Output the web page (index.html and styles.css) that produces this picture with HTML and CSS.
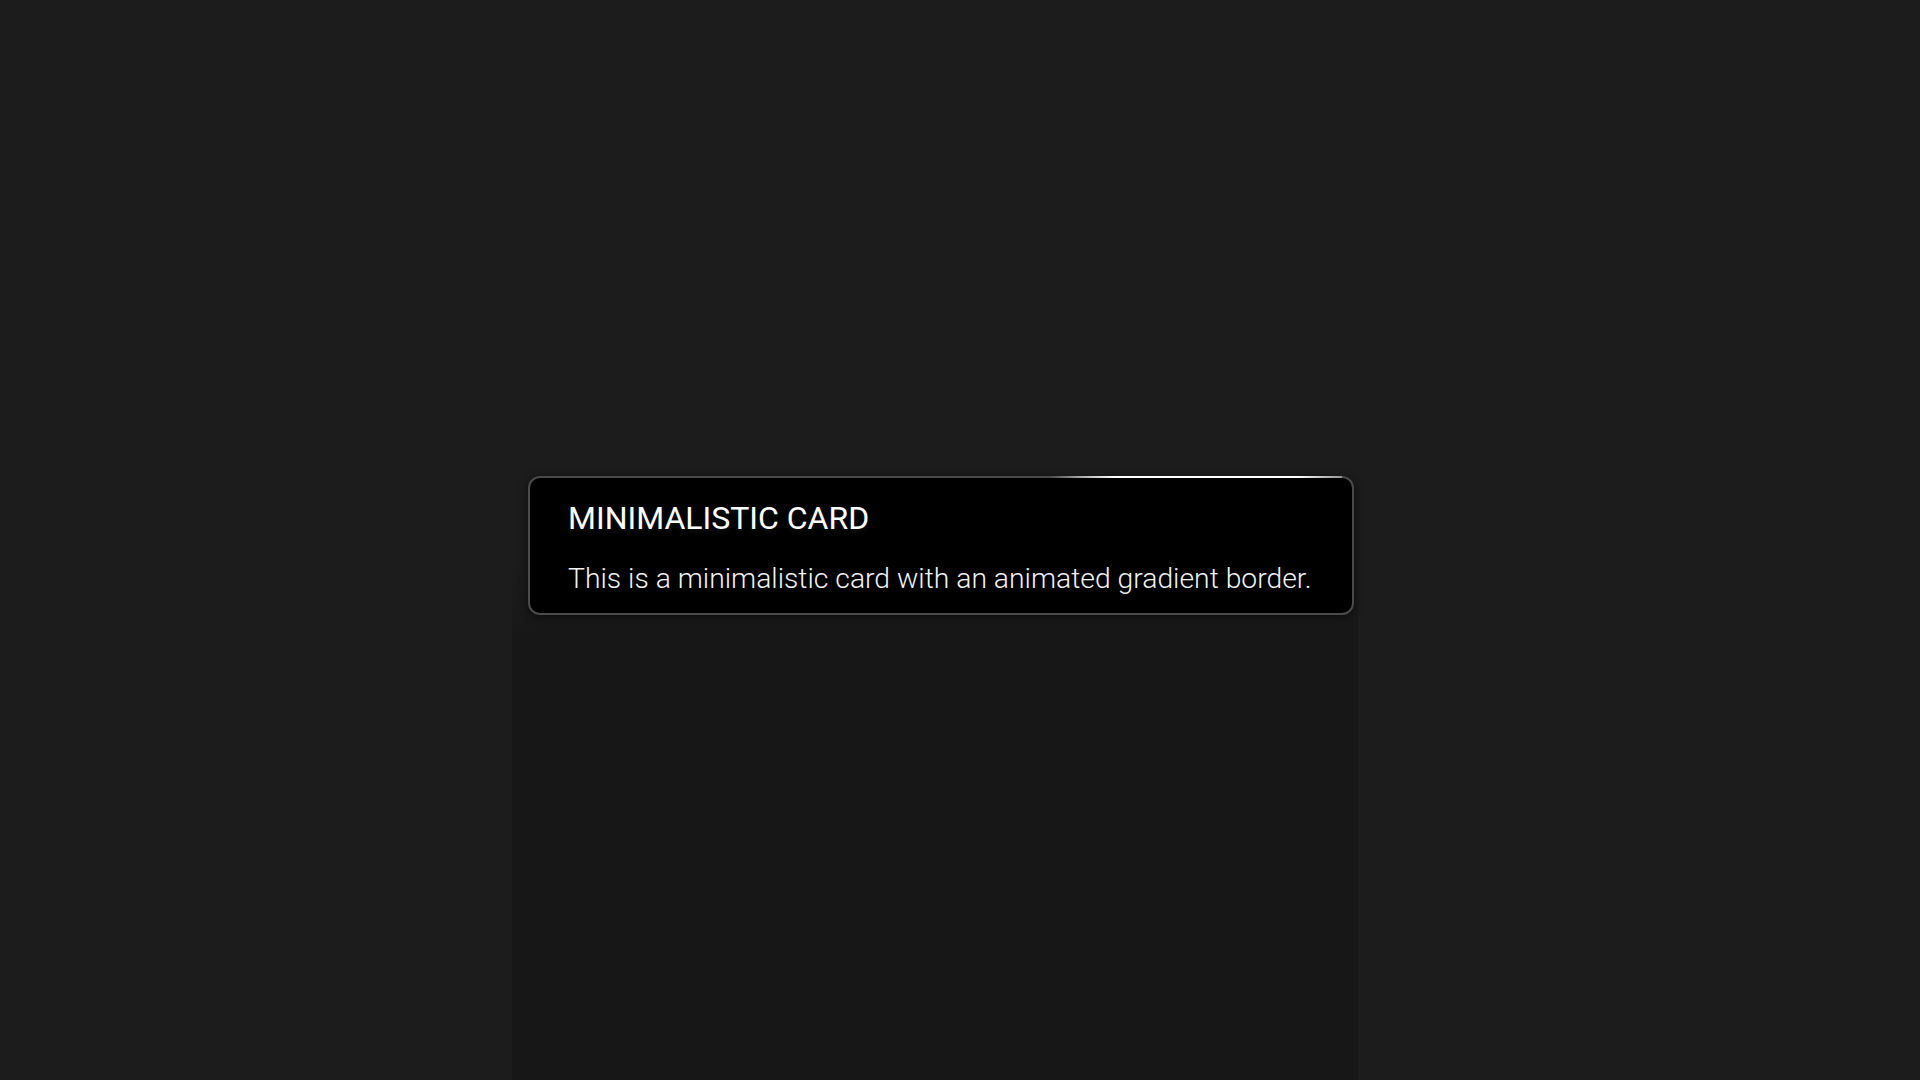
FILE: index.html
```html
<!DOCTYPE html>
<html lang="en">
<head>
<meta charset="utf-8">
<title>Minimalistic Card</title>
<link rel="stylesheet" href="styles.css">
</head>
<body>
<div class="page">
  <div class="gutter"></div>
  <main class="column">
    <div class="card">
      <h2 class="card-title">MINIMALISTIC CARD</h2>
      <p class="card-text">This is a minimalistic card with an animated gradient border.</p>
    </div>
  </main>
  <div class="gutter"></div>
</div>
</body>
</html>
```
FILE: styles.css
```css
html, body {
  margin: 0;
  padding: 0;
  height: 100%;
}
body {
  background: #1c1c1c;
  font-family: Roboto, "Liberation Sans", sans-serif;
  overflow: hidden;
}
.page {
  display: grid;
  grid-template-columns: 512px 846px 1fr;
  height: 100vh;
}
.column {
  padding-top: 476px;
  background: linear-gradient(to bottom, transparent 0, transparent 560px, #171717 640px, #171717 100%);
}
.card {
  position: relative;
  box-sizing: border-box;
  width: 826px;
  height: 139px;
  margin-left: 16px;
  background: #000;
  border: 2px solid #4a4a4a;
  border-radius: 12px;
  padding: 22px 38px 0 38px;
  box-shadow: 0 2px 8px rgba(0, 0, 0, 0.55);
}
.card::before {
  content: "";
  position: absolute;
  top: -2px;
  left: 520px;
  right: 10px;
  height: 2px;
  background: linear-gradient(90deg, rgba(255,255,255,0) 0%, rgba(255,255,255,0.6) 12%, #fff 22%, #fff 85%, rgba(255,255,255,0.4) 100%);
}
.card-title {
  margin: 0;
  color: #fff;
  font-size: 32px;
  font-weight: 400;
  line-height: 37px;
  text-shadow: 0 3px 4px rgba(255,255,255,0.08);
}
.card-text {
  margin: 25px 0 0 0;
  color: #f2f2f2;
  font-size: 28.3px;
  font-weight: 300;
  line-height: 33px;
}
```
